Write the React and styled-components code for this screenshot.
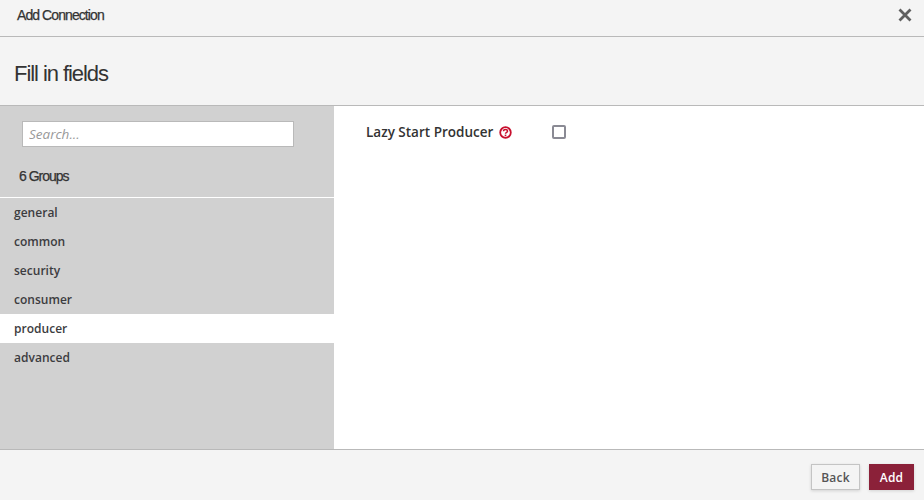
import React from "react";
import styled, { createGlobalStyle } from "styled-components";

const Global = createGlobalStyle`
  html, body { margin: 0; padding: 0; background: #fff; }
  body { width: 924px; height: 500px; overflow: hidden; font-family: "Open Sans", sans-serif; }
  * { box-sizing: border-box; }
`;

const Dialog = styled.div`
  width: 924px;
  height: 500px;
  display: flex;
  flex-direction: column;
  background: #f4f4f4;
`;

const TitleBar = styled.header`
  height: 37px;
  flex: none;
  display: flex;
  align-items: flex-start;
  justify-content: space-between;
  padding: 7px 12px 0 17px;
  border-bottom: 1px solid #b9b9b9;
`;

const DialogTitle = styled.h1`
  margin: 0;
  font: 400 14px/16px "Liberation Sans", Arial, sans-serif;
  letter-spacing: -0.92px;
  color: #333;
  -webkit-text-stroke: 0.25px #333;
`;

const CloseButton = styled.button`
  border: 0;
  padding: 0;
  background: none;
  width: 14px;
  height: 14px;
  margin-top: 1px;
  display: block;
`;

const StepHeader = styled.div`
  height: 69px;
  flex: none;
  display: flex;
  align-items: flex-start;
  padding: 24px 14px 0;
  border-bottom: 1px solid #b9b9b9;
`;

const StepTitle = styled.h2`
  margin: 0;
  font: 400 22px/26px "Liberation Sans", Arial, sans-serif;
  letter-spacing: -1.06px;
  color: #333;
`;

const Body = styled.div`
  height: 343px;
  flex: none;
  display: flex;
  background: #fff;
`;

const Sidebar = styled.aside`
  width: 334px;
  flex: none;
  background: #d1d1d1;
`;

const SearchArea = styled.div`
  height: 92px;
  padding: 15px 40px 0 22px;
  border-bottom: 1px solid #fff;
`;

const SearchInput = styled.input`
  display: block;
  width: 272px;
  height: 26px;
  border: 1px solid #b9b9b9;
  background: #fff;
  padding: 0 6px;
  font: italic 400 13.5px "Open Sans", sans-serif;
  outline: none;
  &::placeholder { color: #999; opacity: 1; }
`;

const GroupCount = styled.div`
  margin: 21px 0 0 -3px;
  font: 400 14px/16px "Liberation Sans", Arial, sans-serif;
  letter-spacing: -1px;
  color: #333;
  -webkit-text-stroke: 0.25px #333;
`;

const GroupList = styled.ul`
  list-style: none;
  margin: 0;
  padding: 0;
`;

const GroupItem = styled.li`
  height: 29px;
  padding: 0 14px;
  font: 600 12px/29px "Open Sans", sans-serif;
  letter-spacing: 0.02px;
  color: #3c3c40;
  background: ${(p) => (p.$active ? "#fff" : "transparent")};
`;

const FieldPane = styled.main`
  flex: 1;
  padding: 17px 32px;
`;

const Field = styled.div`
  display: flex;
  align-items: center;
  height: 18px;
`;

const FieldLabel = styled.label`
  font: 600 13.5px/18px "Open Sans", sans-serif;
  color: #333;
`;

const HelpIcon = styled.svg`
  width: 13px;
  height: 13px;
  margin: 1px 0 0 6px;
  flex: none;
`;

const Check = styled.span`
  width: 14px;
  height: 14px;
  margin-left: 40px;
  flex: none;
  border: 2px solid #8a8a94;
  border-radius: 2px;
  background: #fff;
`;

const Footer = styled.footer`
  flex: 1;
  display: flex;
  align-items: flex-start;
  justify-content: flex-end;
  gap: 9px;
  padding: 14px 10px 0;
  border-top: 1px solid #b9b9b9;
`;

const Button = styled.button`
  height: 26px;
  padding: 0;
  width: ${(p) => (p.$primary ? "45px" : "49px")};
  border: 1px solid ${(p) => (p.$primary ? "#8b2139" : "#c4c4c4")};
  background: ${(p) => (p.$primary ? "#8b2139" : "#f4f4f4")};
  color: ${(p) => (p.$primary ? "#fff" : "#555")};
  font: 600 12px "Open Sans", sans-serif;
  letter-spacing: 0.2px;
  box-shadow: 0 1px 3px rgba(0, 0, 0, 0.14);
`;

const groups = ["general", "common", "security", "consumer", "producer", "advanced"];

export default function App() {
  return (
    <>
      <Global />
      <Dialog>
        <TitleBar>
          <DialogTitle>Add Connection</DialogTitle>
          <CloseButton aria-label="Close">
            <svg width="14" height="14" viewBox="0 0 14 14">
              <path d="M1.5 1.5 12.5 12.5M12.5 1.5 1.5 12.5" stroke="#5f5f5f" strokeWidth="2.8" fill="none" />
            </svg>
          </CloseButton>
        </TitleBar>
        <StepHeader>
          <StepTitle>Fill in fields</StepTitle>
        </StepHeader>
        <Body>
          <Sidebar>
            <SearchArea>
              <SearchInput placeholder="Search..." />
              <GroupCount>6 Groups</GroupCount>
            </SearchArea>
            <GroupList>
              {groups.map((g) => (
                <GroupItem key={g} $active={g === "producer"}>{g}</GroupItem>
              ))}
            </GroupList>
          </Sidebar>
          <FieldPane>
            <Field>
              <FieldLabel>Lazy Start Producer</FieldLabel>
              <HelpIcon viewBox="0 0 13 13">
                <circle cx="6.5" cy="6.5" r="5.3" fill="none" stroke="#c8102e" strokeWidth="1.8" />
                <path d="M4.5 5.3C4.6 2.9 8.5 3 8.5 5.2 8.5 6.5 6.5 6.3 6.5 7.8" fill="none" stroke="#c8102e" strokeWidth="1.5" />
                <rect x="5.7" y="8.6" width="1.6" height="1.6" fill="#c8102e" />
              </HelpIcon>
              <Check />
            </Field>
          </FieldPane>
        </Body>
        <Footer>
          <Button>Back</Button>
          <Button $primary>Add</Button>
        </Footer>
      </Dialog>
    </>
  );
}
